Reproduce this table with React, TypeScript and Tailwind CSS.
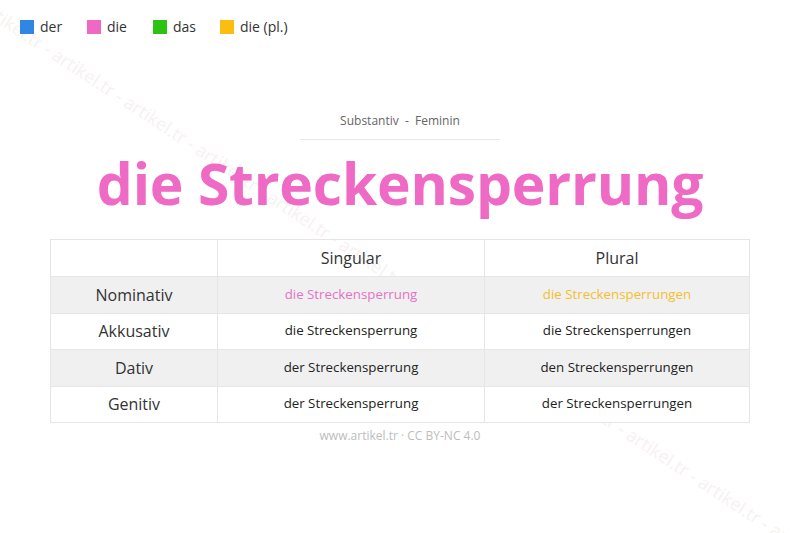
import React from "react";

const font = { fontFamily: '"Open Sans", "Noto Sans", sans-serif' };

const rows = [
  { label: "Nominativ", s: "die Streckensperrung", p: "die Streckensperrungen", gray: true, color: true },
  { label: "Akkusativ", s: "die Streckensperrung", p: "die Streckensperrungen", gray: false, color: false },
  { label: "Dativ", s: "der Streckensperrung", p: "den Streckensperrungen", gray: true, color: false },
  { label: "Genitiv", s: "der Streckensperrung", p: "der Streckensperrungen", gray: false, color: false },
];

export default function App() {
  const wm = Array(12).fill("artikel.tr - ").join("");
  return (
    <div className="relative w-[800px] h-[533px] bg-white overflow-hidden text-[#333]" style={font}>
      <div className="absolute left-[-10px] top-[-6px] origin-top-left rotate-[33.5deg] whitespace-nowrap text-[18px] text-[#f7f2f2] pointer-events-none select-none">
        {wm}
      </div>
      <div className="relative flex items-center pl-[20px] pt-[17px] text-[14px] leading-[20px]">
        <div className="w-[67px] flex items-center gap-[6px]"><span className="w-[14px] h-[14px] bg-[#2f86e3]" />der</div>
        <div className="w-[66px] flex items-center gap-[6px]"><span className="w-[14px] h-[14px] bg-[#ee68c4]" />die</div>
        <div className="w-[67px] flex items-center gap-[6px]"><span className="w-[14px] h-[14px] bg-[#2dc312]" />das</div>
        <div className="flex items-center gap-[6px]"><span className="w-[14px] h-[14px] bg-[#fbbd0f]" />die (pl.)</div>
      </div>
      <div className="relative flex flex-col items-center">
        <div className="mt-[75px] w-[200px] text-center text-[12px] leading-[18px] text-[#666] pb-[9px] border-b border-[#e8e8e8]">
          Substantiv&nbsp; - &nbsp;Feminin
        </div>
        <div className="mt-[3px] text-[57px] leading-[80px] font-bold text-[#ee6ac4] tracking-[-0.2px]">
          die Streckensperrung
        </div>
        <div className="mt-[16px] w-[700px] border border-[#e6e6e6] grid grid-cols-[167px_267px_1fr]">
          <div className="h-[36px] border-r border-[#e6e6e6]" />
          <div className="h-[36px] flex items-center justify-center text-[16px] border-r border-[#e6e6e6]">Singular</div>
          <div className="h-[36px] flex items-center justify-center text-[16px]">Plural</div>
          {rows.map((r) => (
            <React.Fragment key={r.label}>
              <div className={`h-[36.5px] flex items-center justify-center text-[16px] border-t border-r border-[#e6e6e6] ${r.gray ? "bg-[#f0f0f0]" : "bg-white"}`}>{r.label}</div>
              <div className={`h-[36.5px] flex items-center justify-center text-[13.3px] border-t border-r border-[#e6e6e6] ${r.gray ? "bg-[#f0f0f0]" : "bg-white"} ${r.color ? "text-[#e572c9]" : "text-[#222]"}`}>{r.s}</div>
              <div className={`h-[36.5px] flex items-center justify-center text-[13.3px] border-t border-[#e6e6e6] ${r.gray ? "bg-[#f0f0f0]" : "bg-white"} ${r.color ? "text-[#f3bf2c]" : "text-[#222]"}`}>{r.p}</div>
            </React.Fragment>
          ))}
        </div>
        <div className="mt-[4px] text-[12px] leading-[18px] text-[#bdbdbd]">www.artikel.tr · CC BY-NC 4.0</div>
      </div>
    </div>
  );
}
